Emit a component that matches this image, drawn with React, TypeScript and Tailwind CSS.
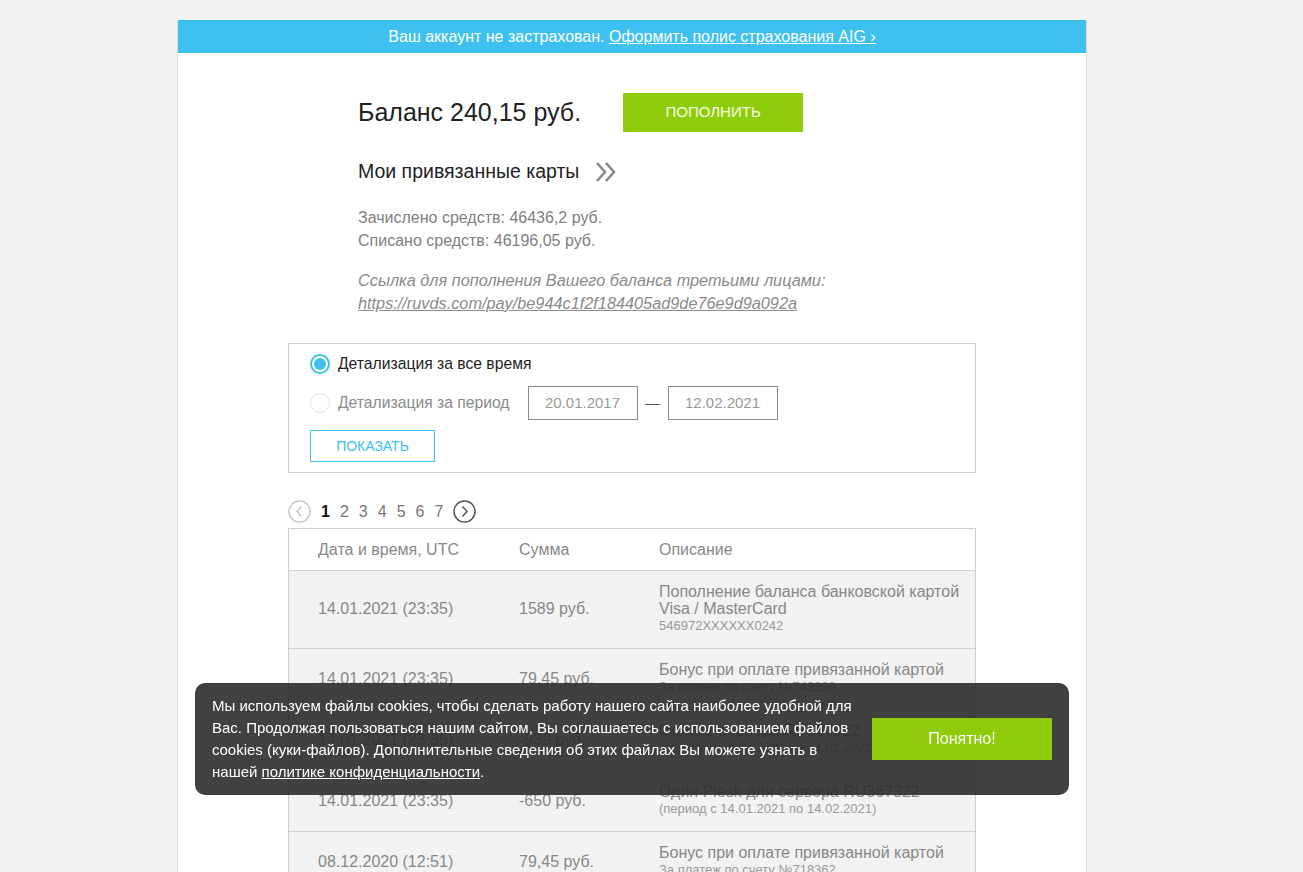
import React from "react";

const ROWS = [
  {
    date: "14.01.2021 (23:35)",
    sum: "1589 руб.",
    lines: ["Пополнение баланса банковской картой", "Visa / MasterCard"],
    note: "546972XXXXXX0242",
  },
  {
    date: "14.01.2021 (23:35)",
    sum: "79,45 руб.",
    lines: ["Бонус при оплате привязанной картой"],
    note: "За платеж по счету №742220",
  },
  {
    date: "14.01.2021 (23:35)",
    sum: "-939 руб.",
    lines: ["Оплата сервера RU367322"],
    note: "(период с 14.01.2021 по 14.02.2021)",
  },
  {
    date: "14.01.2021 (23:35)",
    sum: "-650 руб.",
    lines: ["Один Plesk для сервера RU367322"],
    note: "(период с 14.01.2021 по 14.02.2021)",
  },
  {
    date: "08.12.2020 (12:51)",
    sum: "79,45 руб.",
    lines: ["Бонус при оплате привязанной картой"],
    note: "За платеж по счету №718362",
  },
];

function DoubleChevron() {
  return (
    <svg width="24" height="24" viewBox="0 0 24 24" fill="none" stroke="#8a8a8a" strokeWidth="2.6">
      <path d="M3 3 L11 12 L3 21" />
      <path d="M12 3 L20 12 L12 21" />
    </svg>
  );
}

function PageArrow({ dir, active }: { dir: "prev" | "next"; active?: boolean }) {
  const color = active ? "#555" : "#c8c8c8";
  return (
    <svg width="23" height="23" viewBox="0 0 23 23" fill="none" stroke={color} strokeWidth="1.5">
      <circle cx="11.5" cy="11.5" r="10.5" />
      {dir === "prev" ? <path d="M13.5 6.5 L9 11.5 L13.5 16.5" /> : <path d="M9.5 6.5 L14 11.5 L9.5 16.5" />}
    </svg>
  );
}

export default function App() {
  return (
    <div className="min-h-screen bg-[#f2f2f2] pt-[20px] font-['Liberation_Sans',Arial,sans-serif]">
      <div className="ml-[177px] w-[910px] bg-white border-x border-[#dedede] pb-[40px]">
        {/* Insurance notice */}
        <div className="h-[33px] bg-[#3ec1f0] flex items-center justify-center text-white text-[16px]">
          Ваш аккаунт не застрахован.&nbsp;
          <a href="#" className="underline">Оформить полис страхования AIG ›</a>
        </div>

        <div className="pl-[110px] pt-[40px]">
          <div className="ml-[70px]">
            <div className="flex items-center">
              <span className="text-[25px] text-[#222]">Баланс 240,15 руб.</span>
              <button className="ml-[42px] w-[180px] h-[39px] bg-[#8fcc0b] text-[#f4ffe0] text-[15px]">
                ПОПОЛНИТЬ
              </button>
            </div>
            <div className="mt-[28px] h-[24px] flex items-center gap-[15px]">
              <span className="text-[19.5px] text-[#222]">Мои привязанные карты</span>
              <DoubleChevron />
            </div>
            <div className="mt-[22px] text-[16px] leading-[23px] text-[#808080]">
              <div>Зачислено средств: 46436,2 руб.</div>
              <div>Списано средств: 46196,05 руб.</div>
            </div>
            <div className="mt-[17px] text-[16.3px] leading-[23px] text-[#8a8a8a] italic">
              <div>Ссылка для пополнения Вашего баланса третьими лицами:</div>
              <a href="#" className="underline">https://ruvds.com/pay/be944c1f2f184405ad9de76e9d9a092a</a>
            </div>
          </div>

          {/* Filter */}
          <div className="mt-[28px] w-[688px] h-[130px] border border-[#cccccc] pl-[21px] pt-[10px]">
            <div className="flex items-center h-[20px] gap-[8px]">
              <span className="w-[20px] h-[20px] rounded-full border-2 border-[#3ec1f0] p-[2px]">
                <span className="block w-full h-full rounded-full bg-[#3ec1f0]" />
              </span>
              <span className="text-[15.7px] text-[#222]">Детализация за все время</span>
            </div>
            <div className="mt-[12px] flex items-center h-[34px]">
              <span className="w-[20px] h-[20px] rounded-full border-[1.5px] border-[#e2e2e2]" />
              <span className="ml-[8px] text-[15.7px] text-[#8a8a8a]">Детализация за период</span>
              <div className="ml-[18px] w-[110px] h-[34px] border border-[#8c8c8c] flex items-center justify-center text-[15px] text-[#9a9a9a]">
                20.01.2017
              </div>
              <span className="w-[30px] text-center text-[15px] text-[#555]">—</span>
              <div className="w-[110px] h-[34px] border border-[#8c8c8c] flex items-center justify-center text-[15px] text-[#9a9a9a]">
                12.02.2021
              </div>
            </div>
            <button className="mt-[10px] w-[125px] h-[32px] border border-[#3ec1f0] text-[#3ec1f0] text-[14px]">
              ПОКАЗАТЬ
            </button>
          </div>

          {/* Pagination */}
          <div className="mt-[27px] flex items-center h-[23px]">
            <PageArrow dir="prev" />
            <div className="ml-[10px] flex items-center gap-[10px] text-[16px] text-[#777]">
              <span className="font-bold text-[#111]">1</span>
              <span>2</span>
              <span>3</span>
              <span>4</span>
              <span>5</span>
              <span>6</span>
              <span>7</span>
            </div>
            <div className="ml-[10px]">
              <PageArrow dir="next" active />
            </div>
          </div>

          {/* Transactions */}
          <div className="mt-[5px] w-[688px] border border-[#cccccc] text-[16px] text-[#888]">
            <div className="flex items-center h-[41px]">
              <div className="w-[230px] pl-[29px]">Дата и время, UTC</div>
              <div className="w-[140px]">Сумма</div>
              <div>Описание</div>
            </div>
            {ROWS.map((r, i) => (
              <div key={i} className="flex bg-[#f2f2f2] border-t border-[#d3d3d3] pt-[12px] pb-[13px]">
                <div className="w-[230px] pl-[29px] flex items-center">{r.date}</div>
                <div className="w-[140px] flex items-center">{r.sum}</div>
                <div className="flex-1 leading-[17px]">
                  {r.lines.map((l) => (
                    <div key={l}>{l}</div>
                  ))}
                  <div className="text-[13px] leading-[18px] text-[#999]">{r.note}</div>
                </div>
              </div>
            ))}
          </div>
        </div>
      </div>

      {/* Cookie notice */}
      <div className="fixed left-[195px] top-[683px] w-[874px] h-[112px] rounded-[10px] bg-[rgba(44,44,44,0.9)] flex items-center pl-[17px] pr-[17px]">
        <p className="flex-1 pr-[10px] text-[15px] leading-[22px] text-white">
          Мы используем файлы cookies, чтобы сделать работу нашего сайта наиболее удобной для Вас. Продолжая
          пользоваться нашим сайтом, Вы соглашаетесь с использованием файлов cookies (куки-файлов). Дополнительные
          сведения об этих файлах Вы можете узнать в нашей{" "}
          <a href="#" className="underline">политике конфиденциальности</a>.
        </p>
        <button className="w-[180px] h-[42px] shrink-0 bg-[#8fcc0b] text-white text-[16px]">Понятно!</button>
      </div>
    </div>
  );
}
